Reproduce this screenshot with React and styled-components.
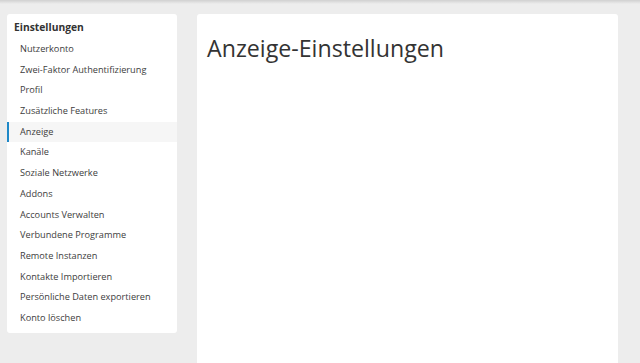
import styled, { createGlobalStyle } from 'styled-components';

const GlobalStyle = createGlobalStyle`
  html, body {
    margin: 0;
    padding: 0;
    background: #ededed;
    font-family: "Open Sans", "Liberation Sans", sans-serif;
    color: #333;
  }
`;

const Page = styled.div`
  position: relative;
  height: 363px;
  overflow: hidden;
  display: flex;
  align-items: flex-start;
  gap: 20px;
  padding: 14px 0 0 7px;
  box-sizing: border-box;

  &::before {
    content: '';
    position: absolute;
    top: 0;
    left: 0;
    right: 0;
    height: 4px;
    background: linear-gradient(rgba(0, 0, 0, 0.12), rgba(0, 0, 0, 0));
  }
`;

const Sidebar = styled.aside`
  width: 170px;
  background: #fff;
  border-radius: 3px;
  padding: 0 0 4px;
  box-sizing: border-box;
`;

const SideTitle = styled.h3`
  margin: 0;
  padding: 1px 7px 0;
  height: 25px;
  line-height: 24px;
  box-sizing: border-box;
  font-size: 10.3px;
  font-weight: 700;
  color: #333;
`;

const NavList = styled.ul`
  list-style: none;
  margin: 0;
  padding: 0;
`;

const NavItem = styled.li`
  height: 20.7px;
  line-height: 20.7px;
  padding-left: 13px;
  font-size: 9.2px;
  color: #3d3d3d;
  background: ${p => (p.$active ? '#f6f6f6' : 'transparent')};
  box-shadow: ${p => (p.$active ? 'inset 2px 0 0 #1e88c7' : 'none')};
`;

const Main = styled.main`
  width: 421px;
  height: 360px;
  background: #fff;
  border-radius: 3px;
  padding: 18px 10px;
  box-sizing: border-box;
`;

const Heading = styled.h1`
  margin: 0;
  font-size: 23.2px;
  font-weight: 400;
  color: #333;
`;

const items = [
  'Nutzerkonto',
  'Zwei-Faktor Authentifizierung',
  'Profil',
  'Zusätzliche Features',
  'Anzeige',
  'Kanäle',
  'Soziale Netzwerke',
  'Addons',
  'Accounts Verwalten',
  'Verbundene Programme',
  'Remote Instanzen',
  'Kontakte Importieren',
  'Persönliche Daten exportieren',
  'Konto löschen',
];

export default function App() {
  return (
    <>
      <GlobalStyle />
      <Page>
        <Sidebar>
          <SideTitle>Einstellungen</SideTitle>
          <NavList>
            {items.map(item => (
              <NavItem key={item} $active={item === 'Anzeige'}>
                {item}
              </NavItem>
            ))}
          </NavList>
        </Sidebar>
        <Main>
          <Heading>Anzeige-Einstellungen</Heading>
        </Main>
      </Page>
    </>
  );
}
